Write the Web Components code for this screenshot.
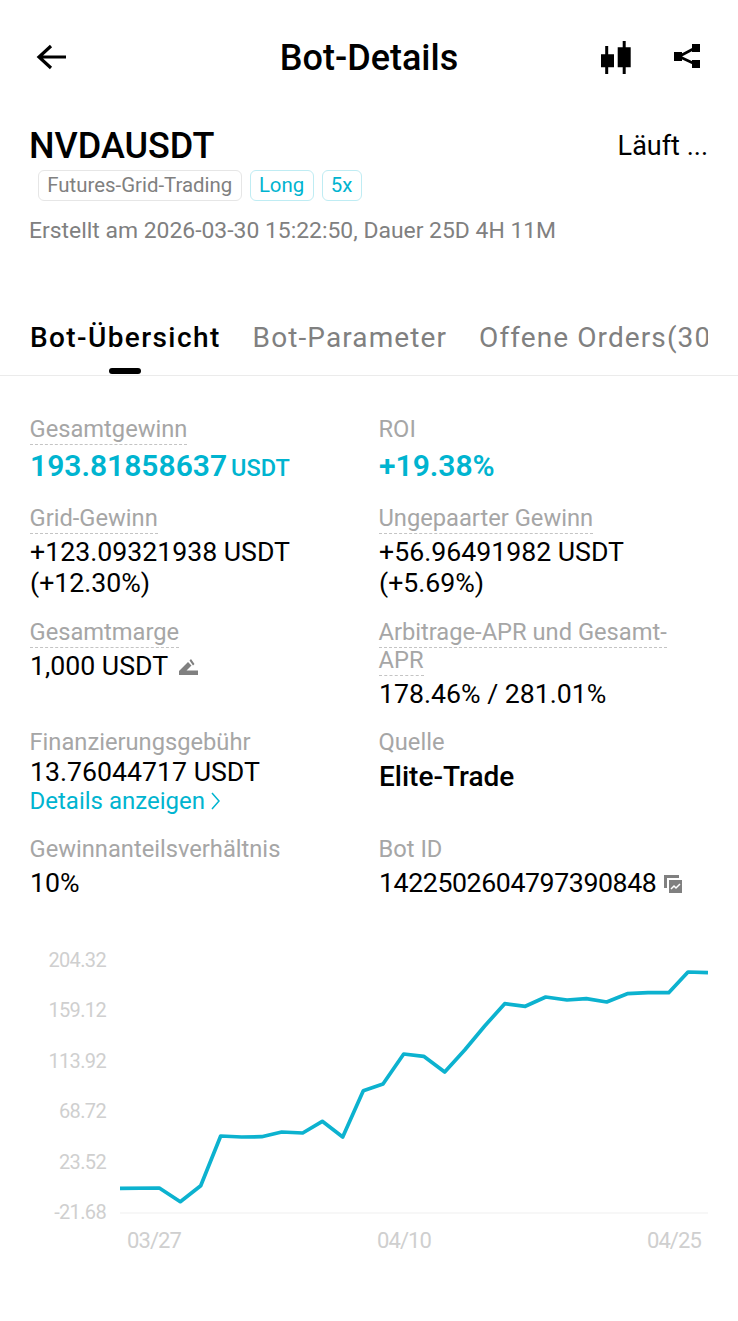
<!DOCTYPE html>
<html lang="de">
<head>
<meta charset="utf-8">
<title>Bot-Details</title>
<style>
  html, body { margin: 0; background: #fff; }
  body { font-family: Roboto, "Noto Sans", sans-serif; color: #000; width: 738px; height: 1321px; overflow: hidden; }
  small { font-size: 23.500px; font-weight: 500; margin-left: 4px; }
  .strong { font-size: 28px; font-weight: 500; }
  .id { letter-spacing: -.4px; }
</style>
</head>
<body>
<bot-header></bot-header>
<bot-summary></bot-summary>
<bot-tabs></bot-tabs>
<stat-grid>
  <stat-item label="Gesamtgewinn" dashed accent>193.81858637<small>USDT</small></stat-item>
  <stat-item label="ROI" accent>+19.38%</stat-item>
  <stat-item label="Grid-Gewinn" dashed>+123.09321938 USDT (+12.30%)</stat-item>
  <stat-item label="Ungepaarter Gewinn" dashed>+56.96491982 USDT (+5.69%)</stat-item>
  <stat-item label="Gesamtmarge" dashed>1,000 USDT <edit-icon></edit-icon></stat-item>
  <stat-item label="Arbitrage-APR und Gesamt-APR" dashed>178.46% / 281.01%</stat-item>
  <stat-item label="Finanzierungsgebühr" tight>13.76044717 USDT<detail-link>Details anzeigen</detail-link></stat-item>
  <stat-item label="Quelle"><span class="strong">Elite-Trade</span></stat-item>
  <stat-item label="Gewinnanteilsverhältnis">10%</stat-item>
  <stat-item label="Bot ID"><span class="id">1422502604797390848</span> <copy-icon></copy-icon></stat-item>
</stat-grid>
<bot-chart></bot-chart>

<script>
// small helper so each component keeps its own template
function tpl(html) {
  const t = document.createElement('template');
  t.innerHTML = html;
  return t;
}
function define(name, template) {
  customElements.define(name, class extends HTMLElement {
    constructor() {
      super();
      this.attachShadow({ mode: 'open' });
      this.shadowRoot.appendChild(template.content.cloneNode(true));
    }
  });
}

define('bot-header', tpl(`
  <style>
    :host { display: grid; grid-template-columns: 1fr auto 1fr; align-items: center; height: 116px; padding: 0 36px; box-sizing: border-box; }
    h1 { margin: 0; font-size: 36px; font-weight: 500; white-space: nowrap; }
    .right { display: flex; align-items: center; justify-content: flex-end; gap: 43px; margin-right: 2px; }
    svg { display: block; }
    .back { margin-bottom: 2px; }
    .candle { margin-bottom: 2px; }
    .share { margin-bottom: 4px; }
  </style>
  <svg class="back" width="31" height="26" viewBox="0 0 31 26"><path d="M15 2L3 13l12 11M3 13H30" fill="none" stroke="#000" stroke-width="3.200"/></svg>
  <h1>Bot-Details</h1>
  <div class="right">
    <svg class="candle" width="30" height="33" viewBox="0 0 30 33"><path fill="#000" d="M0 13.300h13v13H0zM4.200 5h3v28h-3zM16.700 6.300h13v20h-13zM21.700 0h3v33h-3z"/></svg>
    <svg class="share" width="26" height="24" viewBox="0 0 26 24"><path fill="#000" d="M0 8h8v9H0zM18 0h8v8h-8zM18 16h8v8h-8z"/><path d="M5 12.500L21 4M5 12.500L21 20" fill="none" stroke="#000" stroke-width="2.600"/></svg>
  </div>
`));

define('bot-summary', tpl(`
  <style>
    :host { display: block; padding: 0 30px; height: 168px; box-sizing: border-box; }
    .top { display: flex; justify-content: space-between; align-items: flex-start; height: 54px; padding-top: 10px; box-sizing: border-box; }
    .sym { font-size: 36px; font-weight: 500; line-height: 40px; margin-left: -1px; }
    .state { font-size: 27px; line-height: 40px; }
    .tags { display: flex; gap: 8px; margin-left: 8px; }
    .tag { font-size: 20.400px; line-height: 28px; height: 29px; padding: 0 8.300px; border: 1.500px solid #e6e6e6; border-radius: 6px; color: #808080; }
    .tag.on { color: #00b4d0; border-color: #bfecf3; }
    .meta { margin-top: 14px; font-size: 22.900px; line-height: 32px; color: #808080; margin-left: -1px; }
  </style>
  <div class="top"><div class="sym">NVDAUSDT</div><div class="state">Läuft ...</div></div>
  <div class="tags"><span class="tag">Futures-Grid-Trading</span><span class="tag on">Long</span><span class="tag on">5x</span></div>
  <div class="meta">Erstellt am 2026-03-30 15:22:50, Dauer 25D 4H 11M</div>
`));

define('bot-tabs', tpl(`
  <style>
    :host { display: block; border-bottom: 1px solid #ebebeb; height: 92px; box-sizing: border-box; padding: 0 30px; }
    nav { display: flex; gap: 32px; white-space: nowrap; overflow: hidden; font-size: 28px; line-height: 34px; letter-spacing: 1.100px; color: #808080; padding-top: 37px; height: 91px; box-sizing: border-box; }
    .on { color: #000; font-weight: 500; letter-spacing: 1.400px; position: relative; }
    .on::after { content: ""; position: absolute; left: 79px; top: 47px; width: 32px; height: 6px; border-radius: 3px; background: #000; }
  </style>
  <nav><span class="on">Bot-Übersicht</span><span>Bot-Parameter</span><span>Offene Orders(30)</span></nav>
`));

define('stat-grid', tpl(`
  <style>
    :host { display: grid; grid-template-columns: 349px 329px; padding: 0 30px; margin-top: 39px; grid-template-rows: 88.500px 114.500px 110px 107px 70px; }
  </style>
  <slot></slot>
`));

customElements.define('stat-item', class extends HTMLElement {
  constructor() {
    super();
    this.attachShadow({ mode: 'open' });
    this.shadowRoot.innerHTML = `
      <style>
        :host { display: block; font-size: 26.700px; line-height: 31px; }
        .label { font-size: 23.700px; line-height: 28px; color: #a6a6a6; margin-left: -.5px; }
        :host([dashed]) .label span { border-bottom: 1px dashed #c4c4c4; padding-bottom: 1px; }
        .value { margin-top: 5px; }
        :host([tight]) .value { margin-top: 1px; }
        :host([accent]) .value { color: #00b4d0; font-weight: 600; font-size: 30px; margin-top: 7px; }
      </style>
      <div class="label"><span></span></div>
      <div class="value"><slot></slot></div>`;
    this.shadowRoot.querySelector('.label span').textContent = this.getAttribute('label');
  }
});

define('detail-link', tpl(`
  <style>
    :host { display: flex; align-items: center; gap: 6px; font-size: 24px; line-height: 26px; margin-left: -.5px; color: #00b4d0; }
  </style>
  <slot></slot>
  <svg width="9" height="18" viewBox="0 0 9 18"><path d="M1 1l7 8-7 8" fill="none" stroke="#00b4d0" stroke-width="1.500"/></svg>
`));

define('edit-icon', tpl(`
  <style>:host { display: inline-block; vertical-align: -1px; margin-left: 5px; line-height: 0; }</style>
  <svg width="20" height="18" viewBox="0 0 20 18"><path fill="#808080" d="M0 17v-4L9 4l3.500 3.500-5 5H19V17zM10.500 2.500L12 1l3.500 5L14 7.500z"/></svg>
`));

define('copy-icon', tpl(`
  <style>:host { display: inline-block; vertical-align: -1px; margin-left: 1px; line-height: 0; }</style>
  <svg width="18" height="18" viewBox="0 0 18 18"><path fill="#808080" d="M0 0h15v3H3v10H0z"/><path fill="#808080" d="M5 5h13v13H5z"/><path d="M7 14l3-3 2 2 4-4" fill="none" stroke="#fff" stroke-width="1.500"/></svg>
`));

define('bot-chart', tpl(`
  <style>
    :host { display: grid; grid-template-columns: 76px 588px; column-gap: 14px; padding: 0 30px; margin-top: 43px; color: #cfcfcf; font-size: 20px; line-height: 24px; }
    .y { display: flex; flex-direction: column; justify-content: space-between; align-items: flex-end; height: 276px; letter-spacing: -.65px; }
    svg { display: block; }
    .x { grid-column: 2; display: flex; justify-content: space-between; padding: 0 7px; margin-top: 5px; font-size: 22px; letter-spacing: -.9px; }
    .x span:nth-child(2) { margin-right: 20px; }
  </style>
  <div class="y"><span>204.32</span><span>159.12</span><span>113.92</span><span>68.72</span><span>23.52</span><span>-21.68</span></div>
  <svg width="588" height="276" viewBox="120 948 588 276">
    <path d="M120 1213H708" stroke="#efefef" stroke-width="1"/>
    <polyline fill="none" stroke="#0cb2cf" stroke-width="3.700" stroke-linejoin="round" points="120,1188.300 159.300,1188 180.300,1201.700 200.700,1185.700 220.700,1136 241.700,1137 261.700,1136.700 281.700,1132 302.700,1133 322.300,1121.300 342.700,1137 363.300,1090.700 383,1084 403.700,1054 423.700,1056.300 444.700,1072 464.700,1050 484.700,1026 504.700,1003.700 525.300,1006.300 545.700,997 567,1000 586.300,998.700 606.700,1002 627.300,993.700 648,992.700 668.700,992.700 688,972 708,972.700"/>
  </svg>
  <div class="x"><span>03/27</span><span>04/10</span><span>04/25</span></div>
`));
</script>
</body>
</html>
